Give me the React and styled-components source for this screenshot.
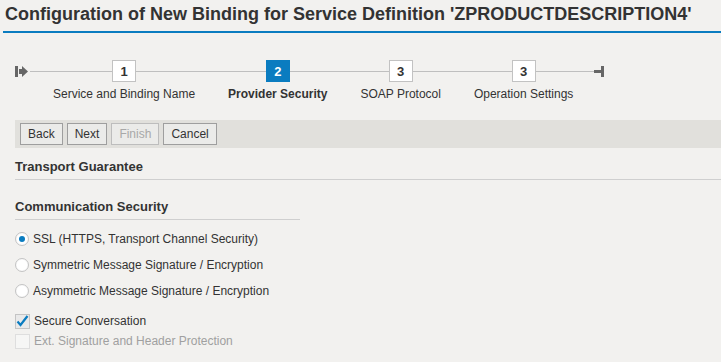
import React from "react";
import styled, { createGlobalStyle } from "styled-components";

const Global = createGlobalStyle`
  html, body { margin: 0; padding: 0; }
  body {
    background: #f2f1ef;
    font-family: "Liberation Sans", Arial, sans-serif;
    color: #333;
  }
`;

const Page = styled.div`
  width: 721px;
  height: 362px;
  overflow: hidden;
`;

const Title = styled.h1`
  margin: 0 0 0 3px;
  padding: 4px 0 0 2px;
  height: 27px;
  font-size: 18px;
  font-weight: bold;
  color: #333;
  border-bottom: 2px solid #0a7cc0;
  white-space: nowrap;
`;

const Stepper = styled.div`
  position: relative;
  display: flex;
  align-items: flex-start;
  margin-top: 27px;
  padding-left: 15px;
  height: 50px;
`;

const Track = styled.div`
  position: absolute;
  top: 11px;
  left: 30px;
  width: 566px;
  height: 1px;
  background: #bfbfbf;
`;

const Marker = styled.svg`
  position: relative;
  margin-top: 6px;
  margin-left: ${(p) => p.$ml || 0}px;
  flex: none;
`;

const Steps = styled.div`
  display: flex;
  gap: 33px;
  margin-left: 24px;
`;

const Step = styled.div`
  position: relative;
  display: flex;
  flex-direction: column;
  align-items: center;
`;

const StepBox = styled.div`
  box-sizing: border-box;
  width: 24px;
  height: 22px;
  display: flex;
  align-items: center;
  justify-content: center;
  font-size: 13px;
  font-weight: bold;
  background: ${(p) => (p.$active ? "#0a7cc0" : "#fff")};
  color: ${(p) => (p.$active ? "#fff" : "#333")};
  border: 1px solid ${(p) => (p.$active ? "#0a7cc0" : "#c2c2c2")};
`;

const StepLabel = styled.div`
  margin-top: 5px;
  font-size: 12px;
  font-weight: ${(p) => (p.$active ? "bold" : "normal")};
  color: #333;
  white-space: nowrap;
`;

const Toolbar = styled.div`
  display: flex;
  gap: 4px;
  align-items: center;
  margin: 10px 0 0 15px;
  height: 28px;
  padding-left: 5px;
  background: #e1e0dc;
`;

const Button = styled.button`
  box-sizing: border-box;
  height: 22px;
  padding: 0 7px;
  font-family: "Liberation Sans", Arial, sans-serif;
  font-size: 12px;
  color: ${(p) => (p.disabled ? "#a8a8a8" : "#333")};
  background: #ebebe9;
  border: 1px solid ${(p) => (p.disabled ? "#bdbdbd" : "#9e9e9e")};
  border-radius: 0;
`;

const SectionTitle = styled.div`
  margin-left: 15px;
  width: ${(p) => p.$width};
  box-sizing: border-box;
  padding-top: ${(p) => p.$top};
  padding-bottom: 5px;
  font-size: 13px;
  font-weight: bold;
  color: #333;
  border-bottom: 1px solid #cfcfcf;
`;

const Options = styled.div`
  display: flex;
  flex-direction: column;
  margin: 6px 0 0 15px;
`;

const Option = styled.label`
  display: flex;
  align-items: center;
  gap: 4px;
  height: ${(p) => p.$h || 26}px;
  font-size: 12px;
  color: ${(p) => (p.$disabled ? "#a0a0a0" : "#333")};
  white-space: nowrap;
`;

const Radio = styled.span`
  box-sizing: border-box;
  width: 14px;
  height: 14px;
  border-radius: 50%;
  border: 1px solid #c4c4c4;
  background: radial-gradient(circle, #fff 55%, #e6e6e6 100%);
  display: flex;
  align-items: center;
  justify-content: center;
  &::after {
    content: "";
    width: 6px;
    height: 6px;
    border-radius: 50%;
    background: ${(p) => (p.$checked ? "#0a7cc0" : "transparent")};
  }
`;

const Box = styled.span`
  box-sizing: border-box;
  width: 15px;
  height: 15px;
  border: 1px solid ${(p) => (p.$disabled ? "#dedede" : "#c4c4c4")};
  background: ${(p) => (p.$disabled ? "#f6f6f5" : "#e9e9e9")};
  display: flex;
  align-items: center;
  justify-content: center;
`;

const Spacer = styled.div`
  height: ${(p) => p.$h}px;
`;

const steps = [
  { n: "1", label: "Service and Binding Name" },
  { n: "2", label: "Provider Security", active: true },
  { n: "3", label: "SOAP Protocol" },
  { n: "3", label: "Operation Settings" },
];

export default function App() {
  return (
    <Page>
      <Global />
      <Title>Configuration of New Binding for Service Definition 'ZPRODUCTDESCRIPTION4'</Title>
      <Stepper>
        <Track />
        <Marker width="14" height="12" viewBox="0 0 14 12">
          <rect x="0" y="0" width="3" height="11" fill="#666" />
          <rect x="4" y="3" width="4" height="5" fill="#666" />
          <polygon points="7,0 13,5.5 7,11" fill="#666" />
        </Marker>
        <Steps>
          {steps.map((s, i) => (
            <Step key={i}>
              <StepBox $active={s.active}>{s.n}</StepBox>
              <StepLabel $active={s.active}>{s.label}</StepLabel>
            </Step>
          ))}
        </Steps>
        <Marker $ml={21} width="11" height="12" viewBox="0 0 11 12">
          <rect x="0" y="4" width="7" height="3" fill="#666" />
          <rect x="7" y="0" width="3" height="11" fill="#666" />
        </Marker>
      </Stepper>
      <Toolbar>
        <Button>Back</Button>
        <Button>Next</Button>
        <Button disabled>Finish</Button>
        <Button>Cancel</Button>
      </Toolbar>
      <SectionTitle $width="706px" $top="11px">Transport Guarantee</SectionTitle>
      <SectionTitle $width="285px" $top="19px">Communication Security</SectionTitle>
      <Options>
        <Option><Radio $checked />SSL (HTTPS, Transport Channel Security)</Option>
        <Option><Radio />Symmetric Message Signature / Encryption</Option>
        <Option><Radio />Asymmetric Message Signature / Encryption</Option>
        <Spacer $h={7} />
        <Option $h={20}>
          <Box>
            <svg width="13" height="12" viewBox="0 0 13 12">
              <path d="M1.5 6.5 L4.5 10 L11.5 1" stroke="#0a7cc0" strokeWidth="2.2" fill="none" />
            </svg>
          </Box>
          Secure Conversation
        </Option>
        <Option $h={20} $disabled><Box $disabled />Ext. Signature and Header Protection</Option>
      </Options>
    </Page>
  );
}
